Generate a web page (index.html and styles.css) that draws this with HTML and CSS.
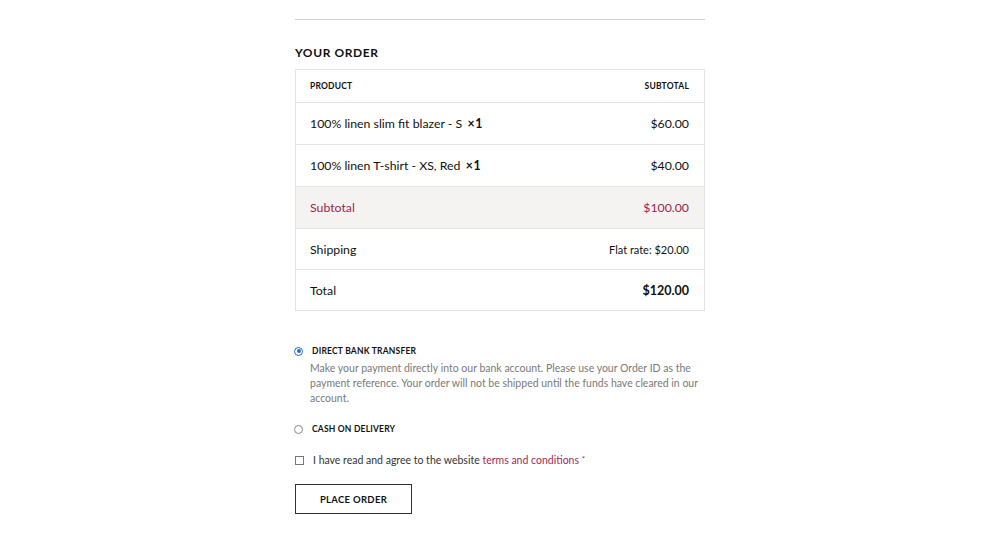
FILE: index.html
```html
<!DOCTYPE html>
<html>
<head>
<meta charset="utf-8">
<link rel="stylesheet" href="styles.css">
</head>
<body>
<div class="page">
  <hr class="rule">
  <h3 class="title">YOUR ORDER</h3>
  <div class="order">
    <div class="row head"><span>PRODUCT</span><span>SUBTOTAL</span></div>
    <div class="row"><span>100% linen slim fit blazer - S <b class="qty">×&#8202;1</b></span><span>$60.00</span></div>
    <div class="row"><span>100% linen T-shirt - XS, Red <b class="qty">×&#8202;1</b></span><span>$40.00</span></div>
    <div class="row sub"><span>Subtotal</span><span>$100.00</span></div>
    <div class="row short"><span>Shipping</span><span class="small">Flat rate: $20.00</span></div>
    <div class="row short"><span>Total</span><span class="total">$120.00</span></div>
  </div>
  <div class="payments">
    <div class="method">
      <span class="radio on"></span><span class="mlabel">DIRECT BANK TRANSFER</span>
    </div>
    <p class="desc">Make your payment directly into our bank account. Please use your Order ID as the payment reference. Your order will not be shipped until the funds have cleared in our account.</p>
    <div class="method second">
      <span class="radio"></span><span class="mlabel">CASH ON DELIVERY</span>
    </div>
  </div>
  <div class="terms">
    <span class="check"></span><span>I have read and agree to the website <a class="link">terms and conditions</a> <span class="req">*</span></span>
  </div>
  <button class="place">PLACE ORDER</button>
</div>
</body>
</html>
```
FILE: styles.css
```css
html, body { margin: 0; padding: 0; background: #fff; }
body { font-family: "Lato", "Open Sans", sans-serif; color: #111; }
.page { width: 410px; margin: 0 auto; padding-top: 19px; }
.rule { border: 0; border-top: 1px solid #cfcfcf; margin: 0; height: 0; }
.title { font-size: 12px; font-weight: 700; letter-spacing: 0.6px; margin: 25px 0 8px; line-height: 16px; color: #111; }
.order { border: 1px solid #e4e4e4; }
.row { display: flex; justify-content: space-between; align-items: center; height: 41px; padding: 0 15px 0 14px; border-top: 1px solid #e4e4e4; font-size: 12.3px; color: #111; }
.row.short { height: 40px; }
.row:first-child { border-top: 0; }
.row.head { height: 32px; font-size: 8.5px; font-weight: 700; letter-spacing: 0.2px; }
.qty { font-weight: 700; margin-left: 2px; }
.row.sub { background: #f4f3f2; color: #9b1f4c; }
.small { font-size: 11px; }
.total { font-weight: 700; font-size: 12.5px; }
.payments { margin-top: 34px; }
.method { display: flex; align-items: center; height: 12px; }
.method.second { margin-top: 17px; }
.radio { width: 7px; height: 7px; border: 1px solid #888; border-radius: 50%; margin-left: -1px; margin-right: 9px; box-sizing: content-box; position: relative; }
.radio.on { border-color: #1f6fd1; }
.radio.on::after { content: ""; position: absolute; left: 1.5px; top: 1.5px; width: 4px; height: 4px; border-radius: 50%; background: #1f6fd1; }
.mlabel { font-size: 8.5px; font-weight: 700; letter-spacing: 0.2px; }
.desc { margin: 4px 0 0 15px; font-size: 10.5px; line-height: 15px; color: #7a7a7a; }
.terms { display: flex; align-items: center; margin-top: 19px; font-size: 10.5px; color: #333; }
.check { width: 7px; height: 7px; border: 1px solid #777; margin-right: 9px; }
.link { color: #a3285a; }
.req { color: #a3285a; font-size: 8px; vertical-align: top; }
.place { display: block; margin-top: 18px; width: 117px; height: 30px; border: 1px solid #333; background: #fff; font-family: inherit; font-size: 9.5px; font-weight: 700; letter-spacing: 0.3px; color: #111; padding: 0; }
```
